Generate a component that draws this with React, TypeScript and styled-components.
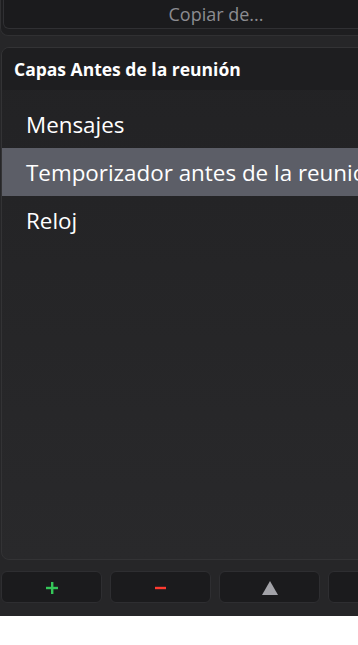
import React from "react";
import styled, { createGlobalStyle } from "styled-components";

const Global = createGlobalStyle`
  html, body { margin: 0; padding: 0; background: #ffffff; }
  body { font-family: "Open Sans", "Noto Sans", "Liberation Sans", sans-serif; }
  * { box-sizing: border-box; }
`;

const Screen = styled.div`
  width: 358px;
  height: 616px;
  background: #262628;
  overflow: hidden;
  display: flex;
  flex-direction: column;
`;

const TopSection = styled.div`
  margin-top: -10px;
  width: 440px;
  height: 46px;
  border: 1px solid #303032;
  border-top: none;
  border-radius: 0 0 8px 8px;
  background: #1e1e20;
  padding: 0 0 6px 2px;
  display: flex;
  flex-direction: column;
  justify-content: flex-end;
`;

const CopyButton = styled.button`
  width: 426px;
  height: 40px;
  border: 1px solid #303033;
  border-top: none;
  border-radius: 0 0 6px 6px;
  background: #1b1b1d;
  color: #8c8c91;
  font-family: inherit;
  font-size: 18px;
  padding: 10px 0 0;
  text-align: center;
  line-height: 28px;
`;

const Panel = styled.section`
  margin: 11px 0 0 1px;
  width: 440px;
  height: 513px;
  border: 1px solid #333335;
  border-radius: 8px;
  overflow: hidden;
  display: flex;
  flex-direction: column;
  background: linear-gradient(180deg, #222224 0%, #29292b 100%);
`;

const PanelHeader = styled.div`
  height: 42px;
  flex: none;
  background: #1e1e20;
  color: #ffffff;
  font-weight: 700;
  font-size: 17.5px;
  padding: 0 0 0 12px;
  display: flex;
  align-items: center;
`;

const List = styled.ul`
  list-style: none;
  margin: 0;
  padding: 10px 0 0;
`;

const Item = styled.li<{ $selected?: boolean }>`
  height: 48px;
  padding-left: 24px;
  display: flex;
  align-items: center;
  font-size: 22.4px;
  color: #ffffff;
  white-space: nowrap;
  background: ${(p) => (p.$selected ? "#5c5e67" : "transparent")};
`;

const Toolbar = styled.div`
  margin: 11px 0 0 1px;
  display: flex;
  gap: 8px;
`;

const ToolButton = styled.button<{ $color: string }>`
  flex: none;
  width: 101px;
  height: 32px;
  border: 1px solid #2e2e31;
  border-radius: 6px;
  background: #1b1b1d;
  color: ${(p) => p.$color};
  display: flex;
  align-items: center;
  justify-content: center;
  padding: 2px 0 0;
`;

const Triangle = styled.span`
  width: 0;
  height: 0;
  border-left: 8px solid transparent;
  border-right: 8px solid transparent;
  border-bottom: 14px solid #a3a3a8;
`;

const Plus = () => (
  <svg width="12" height="12" viewBox="0 0 12 12">
    <rect x="5" y="0" width="2.4" height="12" fill="#35c759" />
    <rect x="0" y="4.8" width="12" height="2.4" fill="#35c759" />
  </svg>
);

const Minus = () => (
  <svg width="11" height="4" viewBox="0 0 11 4">
    <rect x="0" y="0.8" width="11" height="2.4" fill="#ff3b30" />
  </svg>
);

export default function App() {
  return (
    <>
      <Global />
      <Screen>
        <TopSection>
          <CopyButton>Copiar de...</CopyButton>
        </TopSection>
        <Panel>
          <PanelHeader>Capas Antes de la reunión</PanelHeader>
          <List>
            <Item>Mensajes</Item>
            <Item $selected>Temporizador antes de la reunión</Item>
            <Item>Reloj</Item>
          </List>
        </Panel>
        <Toolbar>
          <ToolButton $color="#35c759"><Plus /></ToolButton>
          <ToolButton $color="#ff3b30"><Minus /></ToolButton>
          <ToolButton $color="#a3a3a8"><Triangle /></ToolButton>
          <ToolButton $color="#a3a3a8" />
        </Toolbar>
      </Screen>
    </>
  );
}
